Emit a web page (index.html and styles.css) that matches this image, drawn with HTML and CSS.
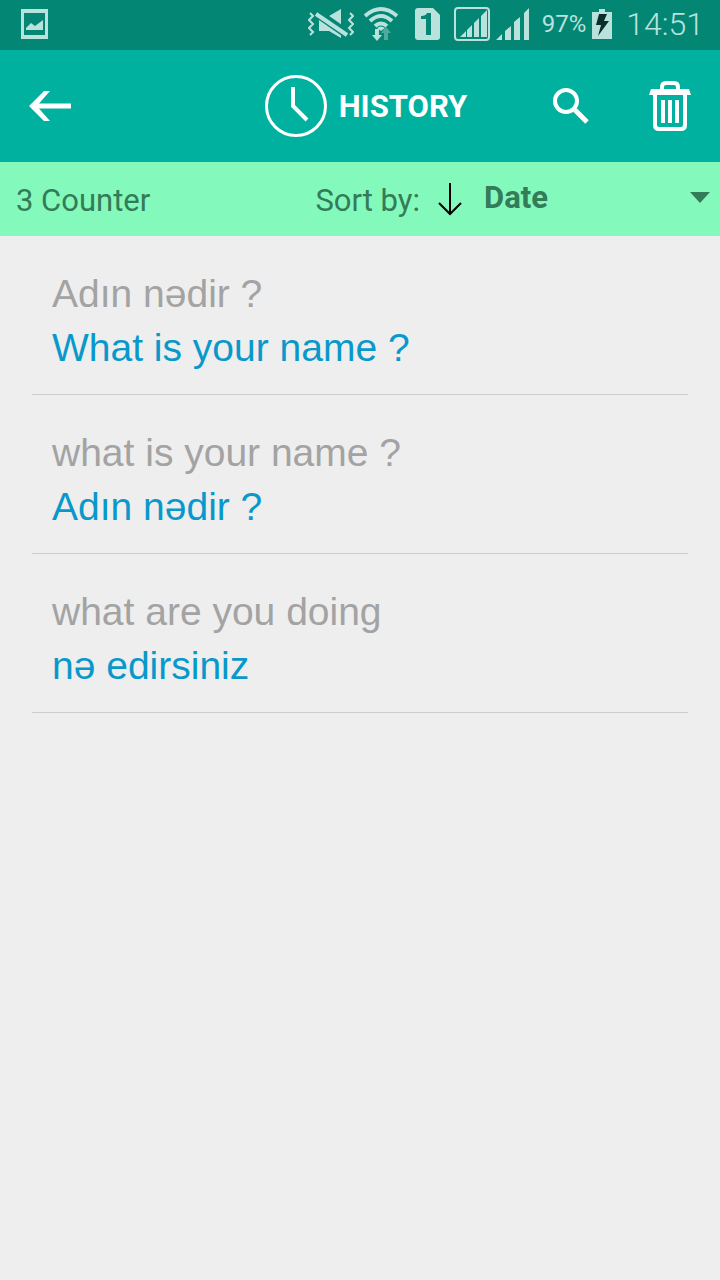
FILE: index.html
```html
<!DOCTYPE html>
<html lang="en">
<head>
<meta charset="utf-8">
<meta name="viewport" content="width=device-width, initial-scale=1">
<title>History</title>
<link rel="stylesheet" href="styles.css">
</head>
<body>
<div class="status">
  <svg class="status-picture" width="28" height="30" viewBox="0 0 28 30" aria-hidden="true"><path fill-rule="evenodd" d="M0 0h27v30H0zM3 4v22h21V4z"/><path d="M5 21v-2l5-5 4 3 8-6v10z"/></svg>
  <svg width="46" height="32" viewBox="0 0 46 32" aria-hidden="true"><path d="M11 8h10L33 1v29L21 23H11z"/><path class="cut" d="M6 3l36 25"/><path class="line" d="M8 6l31 21"/><path class="thin" d="M2 5l3 3-4 4 4 4-4 4 4 4-3 3M42 5l3 3-4 4 4 4-4 4 4 4-3 3"/></svg>
  <svg class="gap-wifi" width="34" height="36" viewBox="0 0 34 36" aria-hidden="true"><path class="line" d="M1 10q16-14 32 0M6 15q11-10 22 0M11 20q6-5 12 0"/><path d="M13 22q4-3 8 0l-4 3z"/><path d="M11 23h4v6h3l-5 6-5-6h3z"/><path class="dim" d="M20 34v-7h-3l5-6 5 6h-3v7z"/></svg>
  <svg class="gap-sim" width="25" height="32" viewBox="0 0 25 32" aria-hidden="true"><path d="M3 0h15l7 7v22q0 3-3 3H3q-3 0-3-3V3q0-3 3-3z"/><path class="hole" d="M11 27V11H6V8q5 0 6-3h4v22z"/></svg>
  <svg class="gap-signal" width="36" height="34" viewBox="0 0 36 34" aria-hidden="true"><rect class="thin" x="1" y="1" width="34" height="32" rx="3"/><path d="M6 30l6-6v6zM13 30v-7l5-5v12zM20 30V16l5-5v19zM27 30V9l6-6v27z"/></svg>
  <svg class="gap-bars" width="34" height="32" viewBox="0 0 34 32" aria-hidden="true"><path d="M0 32l6-6v6zM9 32v-9l6-5v14zM18 32V14l6-5v23zM28 32V5l5-5v32z"/></svg>
  <span class="percent">97%</span>
  <svg class="gap-battery" width="20" height="30" viewBox="0 0 20 30" aria-hidden="true"><path d="M0 3h7V0h6v3h7v27H0z"/><path class="bolt" d="M7 5h8l-3 7h5L6 27l3-11H4z"/></svg>
  <time class="clock">14:51</time>
</div>
<header class="appbar">
  <button class="icon-button back" type="button" aria-label="Back"><svg width="42" height="30" viewBox="0 0 42 30"><path d="M0 15L15 0h6L10 12.500h32v5H10L21 30h-6z"/></svg></button>
  <h1 class="title"><svg width="62" height="62" viewBox="0 0 62 62" aria-hidden="true"><circle class="ring" cx="31" cy="31" r="29.500"/><path class="hands" d="M28 12v19l14 14"/></svg>HISTORY</h1>
  <div class="actions">
    <button class="icon-button" type="button" aria-label="Search"><svg width="36" height="36" viewBox="0 0 36 36"><circle class="lens" cx="13" cy="13" r="11"/><path class="handle" d="M22 22l12 12"/></svg></button>
    <button class="icon-button" type="button" aria-label="Delete history"><svg width="42" height="50" viewBox="0 0 42 50"><path class="lid" d="M13 8V6q0-4 4-4h8q4 0 4 4v2"/><path d="M2 8h38l2 6H0z"/><path class="bin" d="M6 13v31q0 4 4 4h22q4 0 4-4V13M14 19v23M21 19v23M28 19v23"/></svg></button>
  </div>
</header>
<div class="sortbar">
  <span class="counter">3 Counter</span>
  <label class="sort-label" for="sort">Sort by:</label>
  <button class="icon-button direction" type="button" aria-label="Sort descending"><svg width="24" height="34" viewBox="0 0 24 34"><path d="M12 1v31M1 21l11 11 11-11"/></svg></button>
  <div class="picker">
    <select id="sort"><option>Date</option></select>
    <svg class="caret" width="20" height="11" viewBox="0 0 20 11" aria-hidden="true"><path d="M0 0h20L10 11z"/></svg>
  </div>
</div>
<main>
  <ul class="history">
    <li><p class="source">Adın nədir ?</p><p class="result">What is your name ?</p></li>
    <li><p class="source">what is your name ?</p><p class="result">Adın nədir ?</p></li>
    <li><p class="source">what are you doing</p><p class="result">nə edirsiniz</p></li>
  </ul>
</main>
</body>
</html>
```
FILE: styles.css
```css
* { box-sizing: border-box; }

body {
  margin: 0;
  min-height: 100vh;
  background: #eeeeee;
  font-family: Roboto, "Liberation Sans", sans-serif;
}

svg { display: block; flex: none; }

.status {
  display: flex;
  align-items: center;
  height: 50px;
  padding: 0 16px 2px 21px;
  background: #048675;
  color: #b9e2dd;
  fill: #b9e2dd;
}
.status-picture { margin-right: auto; }
.line { fill: none; stroke: #b9e2dd; stroke-width: 4; }
.thin { fill: none; stroke: #b9e2dd; stroke-width: 2; }
.cut { fill: none; stroke: #048675; stroke-width: 9; }
.hole { fill: #048675; }
.dim { fill: #4eaa9e; }
.bolt { fill: #0c2f2c; }
.gap-wifi { margin-left: 10px; }
.gap-sim { margin-left: 17px; }
.gap-signal { margin-left: 14px; }
.gap-bars { margin-left: 6px; }
.gap-battery { margin-left: 6px; }
.percent { margin-left: 12px; font-size: 24px; font-weight: 400; }
.clock { margin-left: 14px; font-size: 32px; font-weight: 300; }

.icon-button {
  display: flex;
  align-items: center;
  justify-content: center;
  padding: 0;
  border: 0;
  background: none;
  fill: #ffffff;
  cursor: pointer;
}

.appbar {
  display: grid;
  grid-template-columns: 1fr auto 1fr;
  align-items: center;
  height: 112px;
  padding: 0 29px;
  background: #00b19f;
  color: #ffffff;
}
.back { justify-self: start; }
.title {
  display: flex;
  align-items: center;
  gap: 12px;
  margin: 0 0 0 12px;
  font-size: 31px;
  font-weight: 700;
}
.actions {
  display: flex;
  align-items: center;
  justify-content: flex-end;
  gap: 60px;
}
.ring, .hands { fill: none; stroke: #ffffff; stroke-width: 3; }
.hands { stroke-width: 4; }
.lens, .handle { fill: none; stroke: #ffffff; stroke-width: 4; }
.handle { stroke-width: 5; }
.lid, .bin { fill: none; stroke: #ffffff; stroke-width: 4; }

.sortbar {
  display: flex;
  align-items: center;
  height: 74px;
  padding: 0 10px 0 16px;
  background: #83f9bc;
  color: #347b57;
  font-size: 31px;
}
.counter { flex: 1; padding-top: 3px; }
.sort-label { padding-top: 3px; }
.direction { margin: 0 22px 0 18px; }
.direction path { fill: none; stroke: #000000; stroke-width: 2; }
.picker {
  display: grid;
  align-items: center;
  width: 226px;
  padding-bottom: 3px;
}
.picker select {
  grid-area: 1 / 1;
  width: 100%;
  padding: 0;
  border: 0;
  background: none;
  appearance: none;
  color: inherit;
  font: inherit;
  font-weight: 700;
}
.caret {
  grid-area: 1 / 1;
  justify-self: end;
  fill: #347b57;
  pointer-events: none;
}

.history {
  margin: 0;
  padding: 0 32px;
  list-style: none;
  font: 39px/54px "Liberation Sans", Arial, sans-serif;
}
.history li {
  padding: 31px 20px 19px;
  border-bottom: 1px solid #cccccc;
}
.history p { margin: 0; }
.source { color: #a3a3a3; }
.result { color: #0998cb; }
```
